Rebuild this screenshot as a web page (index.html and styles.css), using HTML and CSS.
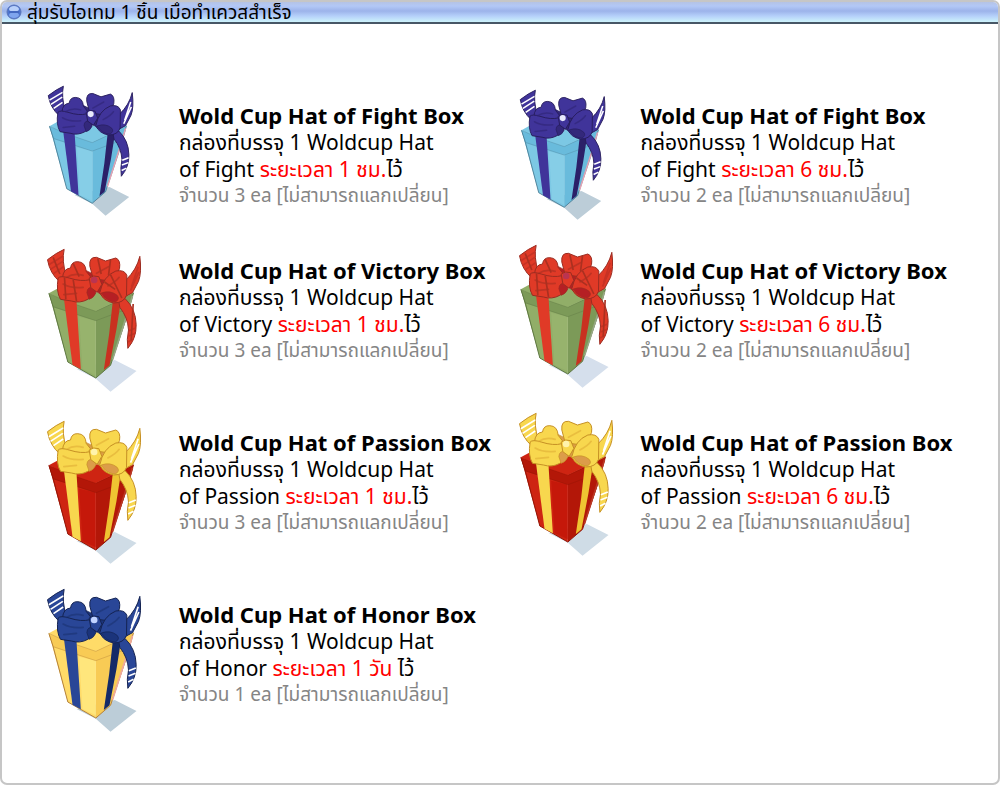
FILE: index.html
```html
<!DOCTYPE html>
<html lang="th">
<head>
<meta charset="utf-8">
<meta name="viewport" content="width=device-width, initial-scale=1">
<title>สุ่มรับไอเทม</title>
<link rel="stylesheet" href="styles.css">
</head>
<body>
<svg class="defs" aria-hidden="true">
  <defs>
    <symbol id="gift" viewBox="32 22 284 432">
      <path class="g-shadow" d="M120 385L235 358L300 391L222 453L178 414Z"/>
      <path class="g-side" d="M178 210L291 156L272 225L222 374L178 412Z"/>
      <path class="g-face" d="M37 158L178 205V412L94 364L58 235Z"/>
      <path class="g-glow" d="M128 228L178 240V404L138 385Z"/>
      <path class="g-lid" d="M37 160L178 212L291 158L274 207L178 240L50 200Z"/>
      <path class="g-top" d="M37 158L62 144L150 168L180 155L291 156L178 212L90 182Z"/>
      <path class="g-edge" d="M37 158L50 198L94 364L178 412L222 374L272 225L291 156"/>
      <path class="g-seam" d="M50 198L178 240L270 206M37 158L90 182L178 212L234 186"/>
      <path class="g-glint" d="M288 165L270 226L228 357"/>
      <path class="g-ribbon" d="M82 172L120 182L133 386L108 372Z"/>
      <path class="g-dark" d="M229 180L254 176L240 265L219 374L202 388L218 280Z"/>
      <path class="g-tail" d="M33 57Q60 36 83 26Q75 60 90 108L70 124Q40 98 33 57Z"/>
      <path class="g-stripe" d="M37 72L80 46M42 86L79 62M51 99L80 79"/>
      <path class="g-tail" d="M310 47Q316 96 306 122L288 156L262 170L268 118Q300 88 310 47Z"/>
      <path class="g-stripe" d="M305 78L285 138M307 94L282 150"/>
      <path class="g-tail" d="M246 178L266 174Q298 205 299 252Q300 292 274 323Q270 296 276 268Q274 230 250 200Z"/>
      <path class="g-stripe" d="M277 270L298 262M276 286L297 278M275 304L291 296"/>
      <path class="g-curl" d="M84 100L150 90L180 105L240 90L255 160L215 178L180 152L150 176L90 170Z"/>
      <path class="g-loop" d="M78 112Q80 84 102 82Q105 62 124 63Q147 64 149 92L168 116L130 132L82 124Z"/>
      <path class="g-loop" d="M170 114L160 76Q157 48 180 50L207 61L238 52Q253 58 249 84Q240 109 212 120Z"/>
      <path class="g-loop" d="M65 112Q72 104 98 112Q135 124 160 117L176 142Q170 167 154 176Q130 189 105 181L72 176Q58 152 65 112Z"/>
      <path class="g-loop" d="M190 156Q200 106 238 91Q264 86 271 104L270 164Q262 187 232 187Q200 181 190 156Z"/>
      <path class="g-curl" d="M174 141Q152 136 151 156L158 176Q172 172 178 157ZM194 157Q222 147 242 164Q252 176 236 184Q208 182 194 157Z"/>
      <path class="g-fold" d="M90 110Q112 96 140 104M180 98L216 78M80 130Q104 144 140 140M214 136Q238 124 248 110M82 162L120 158"/>
      <path class="g-plaid" d="M110 117L120 181M84 110L88 176M184 54L194 100M222 58L216 104M222 102L256 172M204 124L236 146M50 50L70 100M110 68L128 108M290 190L284 300"/>
      <path class="g-knot" d="M158 112Q170 102 187 108L196 131L182 155L163 141Z"/>
      <circle class="g-jewel" cx="173" cy="118" r="10"/>
    </symbol>
  </defs>
</svg>
<main class="panel">
  <header class="panel__bar">
    <svg class="bullet" viewBox="0 0 16 16" aria-hidden="true">
      <circle cx="8" cy="8" r="7" fill="#4d74cf" stroke="#5c76b8"/>
      <ellipse cx="8" cy="11" rx="5" ry="3" fill="#7fa5ee"/>
      <ellipse cx="8" cy="5" rx="5" ry="3" fill="#b9d0fa"/>
      <path d="M3 8H13" stroke="#4468c0" stroke-width="2"/>
    </svg>
    <h1 class="panel__title">สุ่มรับไอเทม 1 ชิ้น เมื่อทำเควสสำเร็จ</h1>
  </header>
  <ul class="items">
    <li class="item">
      <svg class="gift gift--fight gift--small" aria-hidden="true"><use href="#gift"/></svg>
      <div class="item__text">
        <h2 class="item__name">Wold Cup Hat of Fight Box</h2>
        <p class="item__desc">กล่องที่บรรจุ 1 Woldcup Hat<br>of Fight <em class="time">ระยะเวลา 1 ชม.</em>ไว้</p>
        <p class="item__note">จำนวน 3 ea [ไม่สามารถแลกเปลี่ยน]</p>
      </div>
    </li>
    <li class="item item--end">
      <svg class="gift gift--fight gift--small gift--mid" aria-hidden="true"><use href="#gift"/></svg>
      <div class="item__text">
        <h2 class="item__name">Wold Cup Hat of Fight Box</h2>
        <p class="item__desc">กล่องที่บรรจุ 1 Woldcup Hat<br>of Fight <em class="time">ระยะเวลา 6 ชม.</em>ไว้</p>
        <p class="item__note">จำนวน 2 ea [ไม่สามารถแลกเปลี่ยน]</p>
      </div>
    </li>
    <li class="item">
      <svg class="gift gift--victory gift--low" aria-hidden="true"><use href="#gift"/></svg>
      <div class="item__text">
        <h2 class="item__name">Wold Cup Hat of Victory Box</h2>
        <p class="item__desc">กล่องที่บรรจุ 1 Woldcup Hat<br>of Victory <em class="time">ระยะเวลา 1 ชม.</em>ไว้</p>
        <p class="item__note">จำนวน 3 ea [ไม่สามารถแลกเปลี่ยน]</p>
      </div>
    </li>
    <li class="item item--end">
      <svg class="gift gift--victory gift--mid" aria-hidden="true"><use href="#gift"/></svg>
      <div class="item__text">
        <h2 class="item__name">Wold Cup Hat of Victory Box</h2>
        <p class="item__desc">กล่องที่บรรจุ 1 Woldcup Hat<br>of Victory <em class="time">ระยะเวลา 6 ชม.</em>ไว้</p>
        <p class="item__note">จำนวน 2 ea [ไม่สามารถแลกเปลี่ยน]</p>
      </div>
    </li>
    <li class="item">
      <svg class="gift gift--passion gift--low" aria-hidden="true"><use href="#gift"/></svg>
      <div class="item__text">
        <h2 class="item__name">Wold Cup Hat of Passion Box</h2>
        <p class="item__desc">กล่องที่บรรจุ 1 Woldcup Hat<br>of Passion <em class="time">ระยะเวลา 1 ชม.</em>ไว้</p>
        <p class="item__note">จำนวน 3 ea [ไม่สามารถแลกเปลี่ยน]</p>
      </div>
    </li>
    <li class="item item--end">
      <svg class="gift gift--passion" aria-hidden="true"><use href="#gift"/></svg>
      <div class="item__text">
        <h2 class="item__name">Wold Cup Hat of Passion Box</h2>
        <p class="item__desc">กล่องที่บรรจุ 1 Woldcup Hat<br>of Passion <em class="time">ระยะเวลา 6 ชม.</em>ไว้</p>
        <p class="item__note">จำนวน 2 ea [ไม่สามารถแลกเปลี่ยน]</p>
      </div>
    </li>
    <li class="item">
      <svg class="gift gift--honor gift--mid" aria-hidden="true"><use href="#gift"/></svg>
      <div class="item__text">
        <h2 class="item__name">Wold Cup Hat of Honor Box</h2>
        <p class="item__desc">กล่องที่บรรจุ 1 Woldcup Hat<br>of Honor <em class="time">ระยะเวลา 1 วัน</em> ไว้</p>
        <p class="item__note">จำนวน 1 ea [ไม่สามารถแลกเปลี่ยน]</p>
      </div>
    </li>
  </ul>
</main>
</body>
</html>
```
FILE: styles.css
```css
* { box-sizing: border-box; }

body {
  margin: 0;
  background: #fff;
  color: #000;
  font-family: "Noto Sans", "Noto Sans Thai", sans-serif;
}

.defs { display: block; width: 0; height: 0; }

.panel {
  min-height: calc(100vh - 5px);
  border: 2px solid #c6c6c6;
  border-radius: 7px;
  overflow: hidden;
}

.panel__bar {
  display: flex;
  align-items: center;
  gap: 5px;
  height: 22px;
  padding: 0 4px;
  background: linear-gradient(#b5c3e4 0%, #b3c8f6 20%, #9cb3ea 45%, #b5d0fa 70%, #cdf3fb 100%);
  border-bottom: 2px solid #475766;
}

.bullet { width: 16px; height: 16px; }

.panel__title {
  margin: 0;
  font-size: 19px;
  line-height: 20px;
  font-weight: 400;
  white-space: nowrap;
}

.items {
  display: grid;
  grid-template-columns: 462fr 478fr;
  row-gap: 20px;
  margin: 0;
  padding: 61px 12px 24px 45px;
  list-style: none;
}

.item {
  display: grid;
  grid-template-columns: 132px 1fr;
  align-items: start;
}

.item__text { padding-top: 17px; white-space: nowrap; }

.item__name {
  margin: 0;
  font-size: 22px;
  line-height: 27px;
  font-weight: 700;
}

.item__desc {
  margin: 0;
  font-size: 21px;
  line-height: 27px;
}

.item__note {
  margin: 0;
  color: #858585;
  font-size: 19px;
  line-height: 24px;
}

.time { color: #f00; font-style: normal; }

.gift { width: 95px; height: 144px; }
.gift--small { width: 88px; height: 131px; }
.gift--mid { margin-top: 4px; }
.gift--low { margin-top: 8px; }
.item--end .gift { margin-left: 10px; }

.g-shadow { fill: var(--shadow, #bccdd8); }
.g-side { fill: var(--side); }
.g-face, .g-top { fill: var(--face); }
.g-glow { fill: var(--glow); opacity: 0.6; }
.g-lid { fill: var(--side); }
.g-edge { fill: none; stroke: var(--edge); stroke-width: 3; }
.g-seam { fill: none; stroke: var(--edge); stroke-width: 3; opacity: 0.4; }
.g-glint { fill: none; stroke: var(--glint); stroke-width: 5; }
.g-ribbon { fill: var(--ribbon); }
.g-dark { fill: var(--dark); }
.g-tail, .g-loop, .g-knot { fill: var(--ribbon); stroke: var(--line); stroke-width: 3; stroke-linejoin: round; }
.g-curl { fill: var(--curl); stroke: var(--line); stroke-width: 2; }
.g-stripe { fill: none; stroke: var(--stripe); stroke-width: 5; }
.g-fold { fill: none; stroke: var(--fold); stroke-width: 5; stroke-linecap: round; opacity: 0.6; }
.g-plaid { fill: none; stroke: var(--plaid, none); stroke-width: 5; }
.g-jewel { fill: var(--jewel); }

.gift--fight {
  --face: #7cc8e4; --side: #69bbdc; --glow: #8ed2ea; --edge: #4c7f96; --glint: #e3a3b4;
  --ribbon: #40349a; --dark: #2b2068; --line: #251c59; --fold: #2f2575; --curl: #33287b;
  --stripe: #fff; --jewel: #e8e9fb;
}
.gift--victory {
  --face: #91ae68; --side: #7c9a58; --glow: #9bb571; --edge: #5f7843; --glint: #97a884;
  --ribbon: #e03a27; --dark: #c93120; --line: #9b2c21; --fold: #a62f22; --curl: #b51f24;
  --stripe: #c63224; --jewel: #ba3451; --shadow: #d5dfec; --plaid: #ab3020;
}
.gift--passion {
  --face: #ce2412; --side: #b31708; --glow: #bf1005; --edge: #921506; --glint: #bb3825;
  --ribbon: #f8d74e; --dark: #efc432; --line: #c69024; --fold: #e0ad35; --curl: #dc9c49;
  --stripe: #fff; --jewel: #fff3ac; --shadow: #cfdce6;
}
.gift--honor {
  --face: #ffdb68; --side: #f8cb55; --glow: #ffec8b; --edge: #b5813a; --glint: #efa99c;
  --ribbon: #294697; --dark: #142a68; --line: #142352; --fold: #1b3272; --curl: #1b347b;
  --stripe: #fff; --jewel: #c1d3ff;
}
```
